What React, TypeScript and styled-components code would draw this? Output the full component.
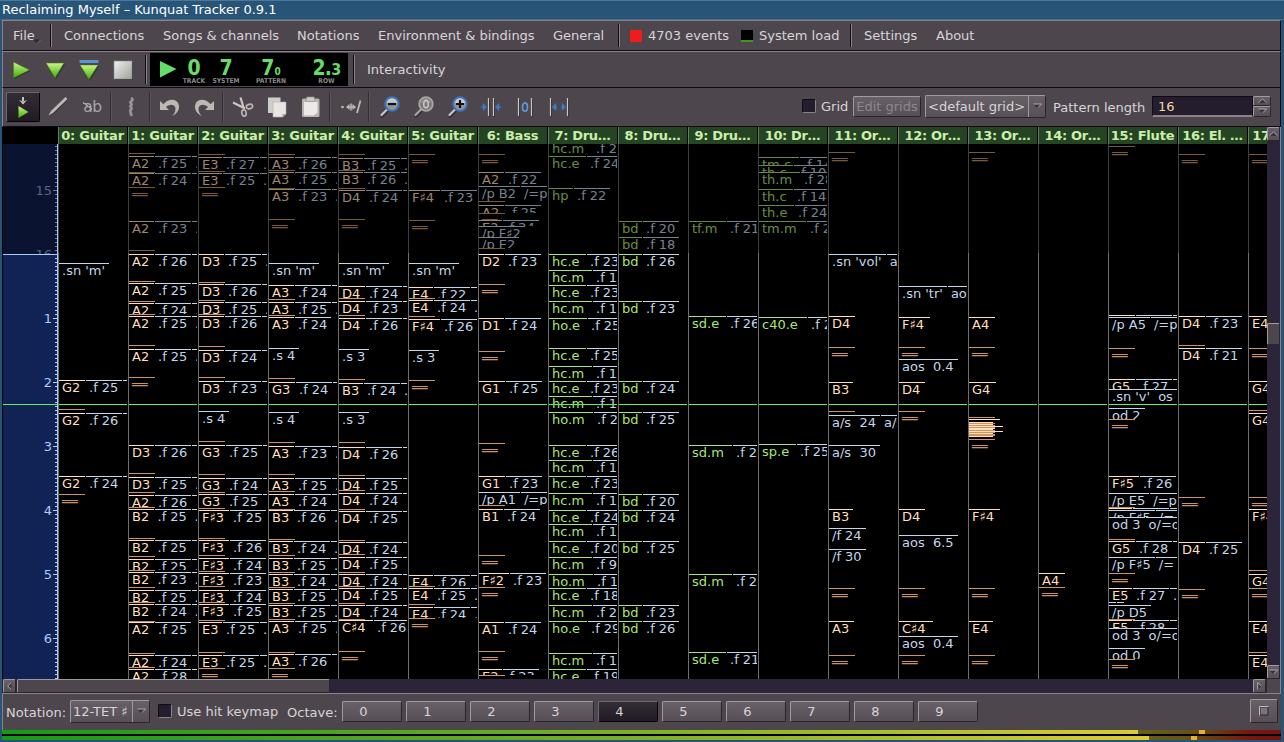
import React from 'react';
import styled, { createGlobalStyle, css } from 'styled-components';

const Global = createGlobalStyle`
  * { box-sizing: border-box; }
  body {
    margin: 0;
    background: #285577;
    font-family: "DejaVu Sans", sans-serif;
    font-size: 13px;
    color: #d8d4d8;
    overflow: hidden;
  }
`;

const C = {
  panel: '#4d474d',
  light: '#8a848a',
  dark: '#0f0a14',
  note: '#ffdfba',
  off: '#cc9460',
  ctrl: '#c4d6ea',
  hit: '#aae673',
};

/* ---------- window ---------- */

const Window = styled.div`
  width: 1284px;
  height: 742px;
  display: flex;
  flex-direction: column;
  background: #285577;
  padding: 0 3px 2px 2px;
`;

const Title = styled.div`
  height: 20px;
  margin: 0 -3px 0 -2px;
  padding-left: 2px;
  border-top: 1px solid #4a7899;
  border-bottom: 1px solid #4c6b86;
  color: #fff;
  line-height: 17px;
  white-space: pre;
`;

const Frame = styled.div`
  flex: 1;
  min-height: 0;
  display: flex;
  flex-direction: column;
  background: ${C.panel};
`;

const Bar = styled.div<{ $h: number; $top?: boolean }>`
  height: ${p => p.$h}px;
  flex: none;
  display: flex;
  align-items: center;
  background: ${C.panel};
  border-bottom: 1px solid ${C.dark};
  border-left: 1px solid ${C.light};
  border-right: 1px solid ${C.dark};
  ${p => p.$top && css`border-top: 1px solid ${C.light};`}
`;

const MenuItem = styled.div<{ $w: number }>`
  width: ${p => p.$w}px;
  flex: none;
  display: flex;
  align-items: center;
  white-space: pre;
`;

const MenuMark = styled.svg`
  margin: 12px 0 0 -2px;
`;

const Divider = styled.div<{ $h: number; $mr: number; $soft?: boolean }>`
  width: 2px;
  height: ${p => p.$h}px;
  flex: none;
  margin-right: ${p => p.$mr}px;
  border-left: 1px solid ${p => (p.$soft ? '#332d35' : C.dark)};
  border-right: 1px solid ${p => (p.$soft ? '#5b555b' : C.light)};
`;

const Swatch = styled.span<{ $c: string; $line?: boolean }>`
  width: 12px;
  height: 12px;
  margin-right: 6px;
  background: ${p => p.$c};
  ${p => p.$line && css`border-bottom: 2px solid #3f9a12;`}
`;

const IconSlot = styled.div<{ $w: number }>`
  width: ${p => p.$w}px;
  height: 30px;
  flex: none;
  display: flex;
  align-items: center;
  justify-content: center;
`;

/* ---------- transport display ---------- */

const Lcd = styled.div`
  width: 198px;
  height: 33px;
  flex: none;
  display: flex;
  background: #000;
  margin-right: 5px;
  padding-left: 10px;
`;

const LcdCell = styled.div<{ $w: number; $shift?: number }>`
  width: ${p => p.$w}px;
  flex: none;
  padding-left: ${p => p.$shift ?? 0}px;
  display: flex;
  flex-direction: column;
  align-items: center;
  font-family: "DejaVu Sans Condensed", "DejaVu Sans", sans-serif;
  font-stretch: condensed;
  font-weight: bold;
`;

const LcdValue = styled.div<{ $tight?: boolean }>`
  height: 25px;
  line-height: 31px;
  font-size: 21px;
  color: #66dd66;
  white-space: pre;
  ${p => p.$tight && css`letter-spacing: -0.8px;`}
`;

const LcdSmall = styled.span<{ $s: number }>`
  font-size: ${p => p.$s}px;
`;

const LcdLabel = styled.div`
  height: 8px;
  line-height: 7px;
  font-family: "DejaVu Sans", sans-serif;
  font-size: 6.7px;
  color: #8a8a8a;
`;

/* ---------- controls ---------- */

const raised = css`
  border: 1px solid;
  border-color: #a09aa0 #2a242c #2a242c #a09aa0;
  border-radius: 2px;
  background: linear-gradient(#676167, #565056);
`;

const Button = styled.div<{ $w: number; $h: number; $mr?: number; $disabled?: boolean; $on?: boolean; $shift?: number }>`
  ${raised}
  width: ${p => p.$w}px;
  height: ${p => p.$h}px;
  flex: none;
  display: flex;
  align-items: center;
  justify-content: center;
  margin-right: ${p => p.$mr ?? 0}px;
  padding-right: ${p => p.$shift ?? 0}px;
  white-space: pre;
  ${p => p.$disabled && css`color: #8e888e;`}
  ${p => p.$on && css`
    background: linear-gradient(#322c34, #211c24);
    border-color: #6d676d #060308 #060308 #6d676d;
  `}
`;

const Select = styled.div<{ $w: number; $mr: number }>`
  ${raised}
  width: ${p => p.$w}px;
  height: 23px;
  flex: none;
  display: flex;
  align-items: stretch;
  margin-right: ${p => p.$mr}px;
  line-height: 21px;
  white-space: pre;
`;

const SelectText = styled.div`
  flex: 1;
  padding-left: 2px;
  border-right: 1px solid #a09aa0;
`;

const SelectArrow = styled.div`
  width: 16px;
  display: flex;
  align-items: center;
  justify-content: center;
`;

const Check = styled.div<{ $mr: number }>`
  width: 14px;
  height: 14px;
  flex: none;
  margin-right: ${p => p.$mr}px;
  background: #231d2d;
  border: 1px solid;
  border-color: #0f0a14 #8a848a #8a848a #0f0a14;
  border-radius: 2px;
`;

const Label = styled.div<{ $w: number; $drop?: boolean }>`
  width: ${p => p.$w}px;
  flex: none;
  padding-top: ${p => (p.$drop ? 2 : 0)}px;
  white-space: pre;
`;

const ToolGroup = styled.div`
  display: flex;
  align-items: center;
  padding-bottom: 2px;
`;

const Spin = styled.div`
  display: flex;
  width: 119px;
  height: 21px;
`;

const SpinField = styled.div`
  flex: 1;
  padding-left: 5px;
  line-height: 19px;
  color: #f0d8a8;
  background: #231d2d;
  border: 1px solid;
  border-color: #0f0a14 #0f0a14 #8a848a #0f0a14;
  border-bottom-width: 2px;
`;

const SpinButtons = styled.div`
  width: 18px;
  display: flex;
  flex-direction: column;
`;

const SpinButton = styled.div`
  ${raised}
  flex: 1;
  display: flex;
  align-items: center;
  justify-content: center;
`;

/* ---------- pattern view ---------- */

const Sheet = styled.div`
  height: 552px;
  flex: none;
  display: flex;
  background: #000;
  border-left: 1px solid #000;
  border-right: 1px solid ${C.light};
  overflow: hidden;
`;

const RulerCol = styled.div`
  width: 55px;
  flex: none;
  padding-top: 17px;
`;

const Ruler = styled.div`
  position: relative;
  height: 535px;
  overflow: hidden;
  background: #112255;
  border-right: 1px solid #aaccff;
`;

const RulerPast = styled.div`
  position: absolute;
  left: 0;
  right: -1px;
  top: 0;
  height: 111px;
  overflow: hidden;
  background: #0a1431;
  border-bottom: 1px solid #aaccff;
  border-right: 1px solid #66779a;
`;

const Tick = styled.div<{ $y: number; $w: number; $dim?: boolean }>`
  position: absolute;
  right: 0;
  top: ${p => p.$y}px;
  width: ${p => p.$w}px;
  height: 1px;
  background: ${p => (p.$dim ? '#66779a' : '#aaccff')};
`;

const RulerText = styled.div<{ $y: number; $dim?: boolean }>`
  position: absolute;
  right: 5px;
  top: ${p => p.$y - 7}px;
  line-height: 16px;
  color: ${p => (p.$dim ? '#55657f' : '#aaccff')};
`;

const Columns = styled.div`
  flex: 1;
  min-width: 0;
  display: flex;
  overflow: hidden;
`;

const Column = styled.div`
  width: 70px;
  flex: none;
  display: flex;
  flex-direction: column;
`;

const Header = styled.div<{ $cut: boolean }>`
  height: 17px;
  width: 69px;
  overflow: hidden;
  padding-right: 1px;
  text-align: center;
  font-weight: bold;
  line-height: 18px;
  letter-spacing: ${p => (p.$cut ? -0.35 : -0.2)}px;
  white-space: pre;
  color: #cceeaa;
  background: #244424;
  border-left: 1px solid #5f7f5f;
`;

const Lane = styled.div`
  position: relative;
  height: 535px;
  width: 69px;
  overflow: hidden;
  border-left: 1px solid;
  border-image: linear-gradient(#3f3f3f 110px, #6e6e6e 110px) 1;
  border-width: 0 0 0 1px;
`;

const EventRow = styled.div<{ $y: number; $h: number; $dim: boolean }>`
  position: absolute;
  left: 0;
  top: ${p => p.$y}px;
  width: 68px;
  height: ${p => p.$h}px;
  overflow: hidden;
  display: flex;
  opacity: ${p => (p.$dim ? 0.6 : 1)};
`;

const Trigger = styled.div<{ $c: string; $w?: number }>`
  flex: none;
  ${p => p.$w && css`width: ${p.$w - 1}px;`}
  margin-right: 1px;
  padding: 0 4px 0 3px;
  height: 17px;
  border-top: 1px solid ${p => p.$c};
  color: ${p => p.$c};
  line-height: 14px;
  white-space: pre;
`;

const Playhead = styled.div`
  position: absolute;
  left: 0;
  right: 0;
  top: 260px;
  height: 1px;
  background: #66ee66;
`;

const WIDTHS: Record<string, number> = {
  A1: 26, A2: 26, A3: 26, A4: 27, B1: 25, B2: 25.5, B3: 25, D1: 26, D2: 26, D3: 26, D4: 27,
  E2: 23.5, E3: 24, E4: 25, E5: 24, G1: 27, G2: 27, G3: 27, G4: 28, G5: 27,
  'F♯2': 31, 'F♯3': 31, 'F♯4': 32, 'F♯5': 31, 'C♯4': 35,
  'hc.e': 38, 'hc.m': 44, 'ho.e': 39, 'ho.m': 45, hp: 25, bd: 24,
  'tm.c': 41, 'th.c': 35, 'th.m': 42, 'th.e': 36, 'tm.m': 48, 'tf.m': 38,
  'sd.e': 38, 'sd.m': 44, 'sp.e': 38, 'c40.e': 49,
};

/*
  One trigger row per entry, separated by ";":
    "<y>"                release
    "<y> <name> ..."     note or hit, then force (f) and a following item
    "<y> =<a>|<b>"       control triggers
  A trailing "." or "-" adds the third item, with or without a visible dot.
*/
const tracks: { name: string; rows: string }[] = [
  { name: '0: Guitar', rows: "263 =.sn 'm';380 G2 25 -;409;413 G2 26 -;476 G2 24 -;494" },
  { name: '1: Guitar', rows: '153;156 A2 25 .;172;173 A2 24 -;187;221 A2 23 .;250;254 A2 26 -;281;283 A2 25 -;301;303 A2 24 .;314;316 A2 25 .;345;349 A2 25 .;377;445 D3 26 -;473;477 D3 25 .;492;495 A2 26 -;507;509 B2 25 .;538;540 B2 25 -;556;559 B2 25 .;570;572 B2 23 .;587;590 B2 25 .;602;604 B2 24 .;621;622 A2 25;653;655 A2 24 -;667;669 A2 28 -' },
  { name: '2: Guitar', rows: '154;157 E3 27 .;171;173 E3 25 .;187;254 D3 25 .;282;284 D3 26 -;300;302 D3 25 .;314;316 D3 26 -;346;350 D3 24 -;377;381 D3 23 .;411 =.s 4;441;445 G3 25 -;474;478 G3 24 -;492;494 G3 25 -;508;510 F♯3 25;538;540 F♯3 26;555;558 F♯3 24;571;573 F♯3 23;586;590 F♯3 24;602;604 F♯3 25;620;622 E3 25 .;652;655 E3 25 .;668' },
  { name: '3: Guitar', rows: "154;157 A3 26 -;170;172 A3 25 .;188;189 A3 23 .;219;263 =.sn 'm';285 A3 24 -;299;302 A3 25 .;315;317 A3 24;348 =.s 4;378;382 G3 24 -;412 =.s 4;442;446 A3 23 .;474;478 A3 25 .;491;494 A3 24 -;509;510 B3 26 .;539;541 B3 24 .;555;558 B3 25 .;572;574 B3 24 .;587;589 B3 25 .;603;605 B3 25 .;619;621 A3 25 .;652;654 A3 26 -;668" },
  { name: '4: Guitar', rows: "154;158 B3 25 .;170;172 B3 26 .;188;190 D4 24 -;219;263 =.sn 'm';286 D4 24 -;298;301 D4 23 -;315;318 D4 26 -;349 =.s 3;379;383 B3 24 .;412 =.s 3;442;447 D4 26 -;475;478 D4 25 -;490;493 D4 24 -;509;511 D4 25 -;540;542 D4 24 -;554;557 D4 25 -;572;574 D4 24 -;586;588 D4 25 -;603;605 D4 24 -;619;620 C♯4 26;651" },
  { name: '5: Guitar', rows: "154;190 F♯4 23;220;263 =.sn 'm';287 E4 22 -;298;300 E4 24 .;316;319 F♯4 26;350 =.s 3;380;575 E4 26 .;586;588 E4 25 .;604;607 E4 24 .;618" },
  { name: '6: Bass', rows: '154;172 A2 22;186 =/p B2|/=p;201;205 A2 25;213;220 E2 24;226 =/p F♯2;237 =/p E2;248;254 D2 23;284;318 D1 24;351;381 G1 25;443;476 G1 23;492 =/p A1|/=p;505;509 B1 24;555;573 F♯2 23;587;622 A1 24;651;669 E2 23;675' },
  { name: '7: Dru…', rows: '141 hc.m 2;156 hc.e 24;188 hp 22;254 hc.e 23;270 hc.m 1;285 hc.e 23;301 hc.m 1;318 ho.e 25;348 hc.e 25;366 hc.m 1;381 hc.e 23;396 hc.m 1;412 ho.m 2;445 hc.e 26;460 hc.m 1;476 hc.e 23;493 hc.m 1;510 hc.e 24;524 hc.m 1;541 hc.e 20;557 hc.m 9;574 ho.m 1;588 hc.e 18;605 hc.m 2;621 ho.e 29;653 hc.m 1;669 hc.e 19' },
  { name: '8: Dru…', rows: '221 bd 20;237 bd 18;254 bd 26;301 bd 23;381 bd 24;412 bd 25;494 bd 20;510 bd 24;541 bd 25;605 bd 23;621 bd 26' },
  { name: '9: Dru…', rows: '221 tf.m 21;316 sd.e 26;445 sd.m 2;574 sd.m 2;652 sd.e 21' },
  { name: '10: Dr…', rows: '157 tm.c 14;165 th.c 10;172 th.m 28;189 th.c 14;205 th.e 24;221 tm.m 2;317 c40.e 2;444 sp.e 25' },
  { name: '11: Or…', rows: "152;254 =.sn 'vol'|ao;316 D4;347;382 B3;411;415 =a/s  24|a/s;445 =a/s  30;509 B3;528 =/f 24;549 =/f 30;588;621 A3;655" },
  { name: '12: Or…', rows: "286 =.sn 'tr'|aos;317 F♯4;347;359 =aos  0.4;382 D4;411;509 D4;535 =aos  6.5;588;621 C♯4;636 =aos  0.4;655" },
  { name: '13: Or…', rows: '152;317 A4;347;382 G4;417;419 F♯4;422 E4;423;424 E4;425;426 C♯4;427;428 A4;429 E4;430;431 C♯4;432;433 E4;434;435;436 E4;439;509 F♯4;588;621 E4;655' },
  { name: '14: Or…', rows: '573 A4;587' },
  { name: '15: Flute', rows: "146;315 A4 25 -;317 =/p A5|/=p;348;379 G5 27 -;389 =.sn 'v'|os;408 =od 2;419;476 F♯5 26;493 =/p E5|/=p;507;508 E5 25 -;510 =/p F♯5|/=;517 =od 3|o/=o;539;541 G5 28 -;557 =/p F♯5|/=;573;588 E5 27 .;602 =/p E5|/=p;605 =/p D5;619;620 E5 28 -;628 =od 3|o/=o;648 =od 0;659" },
  { name: '16: El. …', rows: '154;316 D4 23;345;348 D4 21;497;542 D4 25;589' },
  { name: '17: El. …', rows: '154;316 E4;348;381 G4;410;413 G4;497;509 F♯4;570;574 G4;588;621 E4;652;655 E4' },
];

type Item = { text: string; color: string; width?: number };

function parse(row: string): { y: number; items: Item[] } {
  const cut = row.indexOf(' ');
  if (cut < 0) return { y: +row, items: [{ text: '══', color: C.off, width: 27 }] };
  const y = +row.slice(0, cut);
  const rest = row.slice(cut + 1);
  if (rest[0] === '=') {
    return { y, items: rest.slice(1).split('|').map(text => ({ text, color: C.ctrl })) };
  }
  const [name, force, third] = rest.split(' ');
  const items: Item[] = [{ text: name, color: /^[A-G]/.test(name) ? C.note : C.hit, width: WIDTHS[name] }];
  if (force) items.push({ text: '.f ' + force, color: C.ctrl, width: 37 });
  if (third) items.push({ text: third === '.' ? '.' : ' ', color: C.ctrl, width: 20 });
  return { y, items };
}

function Track({ name, rows }: { name: string; rows: string }) {
  const events = rows.split(';').map(parse);
  return (
    <Column>
      <Header $cut={name.endsWith('…')}>{name}</Header>
      <Lane>
        {events.map((e, i) => {
          const h = Math.min(17, (events[i + 1]?.y ?? 999) - e.y);
          return (
            <EventRow key={i} $y={e.y - 144} $h={h} $dim={e.y < 254}>
              {e.items.map((it, j) => (
                <Trigger key={j} $c={it.color} $w={it.width}>{h > 4 ? it.text : ''}</Trigger>
              ))}
            </EventRow>
          );
        })}
        <Playhead />
      </Lane>
    </Column>
  );
}

function TimeRuler() {
  return (
    <RulerCol>
      <Ruler>
        {Array.from({ length: 106 }, (_, i) => (
          <Tick key={i} $y={114 + i * 4} $w={(i + 1) % 16 === 0 ? 4 : 2} />
        ))}
        {[1, 2, 3, 4, 5, 6].map(n => <RulerText key={n} $y={110 + n * 64}>{n}</RulerText>)}
        <RulerPast>
          {Array.from({ length: 28 }, (_, i) => (
            <Tick key={i} $dim $y={110 - i * 4} $w={i % 16 === 0 ? 4 : 2} />
          ))}
          <RulerText $dim $y={46}>15</RulerText>
          <RulerText $dim $y={110}>16</RulerText>
        </RulerPast>
        <Playhead />
      </Ruler>
    </RulerCol>
  );
}

/* ---------- scroll bars ---------- */

const VScroll = styled.div`
  width: 13px;
  flex: none;
  display: flex;
  flex-direction: column;
  background: #2c2438;
`;

const HScroll = styled.div`
  height: 14px;
  flex: none;
  display: flex;
  background: #2c2438;
  padding-left: 1px;
  border-right: 1px solid ${C.light};
`;

const ScrollButton = styled.div`
  ${raised}
  width: 13px;
  height: 14px;
  flex: none;
  display: flex;
  align-items: center;
  justify-content: center;
`;

const Thumb = styled.div<{ $w: number; $h: number }>`
  ${raised}
  background: ${C.panel};
  width: ${p => p.$w}px;
  height: ${p => p.$h}px;
  flex: none;
`;

const Gap = styled.div<{ $s?: number }>`
  flex: ${p => (p.$s === undefined ? '1' : `0 0 ${p.$s}px`)};
`;

const Corner = styled.div`
  width: 13px;
  background: ${C.panel};
`;

/* ---------- footer ---------- */

const Footer = styled.div`
  height: 37px;
  flex: none;
  display: flex;
  align-items: center;
  padding: 0 0 2px 3px;
  border-top: 1px solid ${C.light};
  border-left: 1px solid ${C.light};
`;

const Meter = styled.div<{ $level: number; $peak: number }>`
  height: 4px;
  flex: none;
  background:
    linear-gradient(#e8b030, #e8b030) ${p => p.$peak}px 0 / 6px 4px no-repeat,
    linear-gradient(to right, #149a14 0, #7db026 640px, #dccc30 1146px) 0 0 / ${p => p.$level}px 4px no-repeat,
    linear-gradient(to right, #66601a 1140px, #665014 1190px, #7a1410 1250px, #781410 100%);
`;

const Meters = styled.div`
  height: 10px;
  flex: none;
  display: flex;
  flex-direction: column;
  gap: 2px;
  background: #000;
`;

/* ---------- icons ---------- */

const Svg = ({ w = 24, h = 24, children }: { w?: number; h?: number; children: React.ReactNode }) => (
  <svg width={w} height={h} viewBox={`0 0 ${w} ${h}`} fill="none">{children}</svg>
);

const Glyph = styled.svg`
  flex: none;
`;

const arrowPaths = {
  up: ['M0 6h9L4.500 1.500z', 'M0.500 5.800L4.500 1.800l4 4'],
  down: ['M0 2h9L4.500 6.500z', 'M0.500 2h8L4.800 5.800'],
  left: ['M6.500 0v8L2.500 4z', 'M6.300 0.500L2.700 4l3.600 3.500'],
  right: ['M2.500 0v8l4-4z', 'M2.700 7.500v-7l3.600 3.500'],
};

const Arrow = ({ d }: { d: keyof typeof arrowPaths }) => (
  <Glyph width="9" height="8" viewBox="0 0 9 8">
    <path d={arrowPaths[d][0]} fill="#38323a" />
    <path d={arrowPaths[d][1]} stroke="#b4aeb4" strokeWidth="1" fill="none" />
  </Glyph>
);

const DefsHolder = styled.svg`
  display: block;
  height: 0;
`;

const Defs = () => (
  <DefsHolder width="0" height="0">
    <defs>
      <linearGradient id="g" x1="0" y1="0" x2="0" y2="1">
        <stop offset="0" stopColor="#c8f488" />
        <stop offset="1" stopColor="#3fae06" />
      </linearGradient>
      <linearGradient id="s" x1="0" y1="0" x2="1" y2="1">
        <stop offset="0" stopColor="#f0f0ee" />
        <stop offset="1" stopColor="#a0a09c" />
      </linearGradient>
    </defs>
  </DefsHolder>
);

const Lens = ({ mark, gray }: { mark: '-' | '+' | '0'; gray?: boolean }) => (
  <Svg>
    <path d="M4 21l7-7" stroke="#2c2830" strokeWidth="3.400" strokeLinecap="round" opacity=".8" />
    <path d="M3.500 20l7-7" stroke={gray ? '#aaa6a4' : '#c8c8c4'} strokeWidth="2.200" strokeLinecap="round" />
    <circle cx="14" cy="9" r="6.800" fill={gray ? '#7c767a' : '#8f9498'} stroke={gray ? '#aaa6a4' : '#3a74c0'} strokeWidth="1.800" />
    <path d="M9 8a5 4.500 0 0 1 10 0z" fill={gray ? '#8e8a8c' : '#c8ccd0'} />
    {mark === '0'
      ? <ellipse cx="14" cy="9" rx="2.300" ry="3.800" stroke="#cac6c4" strokeWidth="1.500" />
      : <path d={mark === '+' ? 'M10 9h8M14 5v8' : 'M10 9h8'} stroke="#111" strokeWidth="2.200" />}
  </Svg>
);

const Rails = ({ x1, x2, children }: { x1: number; x2: number; children: React.ReactNode }) => (
  <Svg>
    <path d={`M${x1 + 1} 4v18M${x2 + 1} 4v18`} stroke="#2e2a32" strokeWidth="1" />
    <path d={`M${x1} 3v18M${x2} 3v18`} stroke="#c8c8c0" strokeWidth="1.200" />
    {children}
  </Svg>
);

const gray = '#bcb8b4';

const icons = {
  insert: (
    <Svg>
      <path d="M12 2v4" stroke="#c8c4c0" strokeWidth="2" />
      <path d="M8 5l4 4.500L16 5l-4 1.500z" fill="#c8c4c0" />
      <path d="M7.500 11v12l10-6z" fill="url(#g)" />
    </Svg>
  ),
  pen: <Svg><path d="M4 21l2-4.500L20 2.500l2.500 2L8.500 18.500z" fill="#2e2a32" opacity=".5" /><path d="M2.500 20.500l2.500-4.500L19.500 2l2 2L7 18z" fill={gray} /></Svg>,
  wiggle: <Svg><path d="M11 3c2 1 2 2 0 3.500s2 2.500 0 4 2 2.500 0 4 1 4 0 6.500" stroke="#8c878a" strokeWidth="3" /><path d="M11 3c2 1 2 2 0 3.500s2 2.500 0 4 2 2.500 0 4 1 4 0 6.500" stroke="#aaa5a5" strokeWidth="1" /></Svg>,
  undo: <Svg><path d="M2 6v9h9l-3-3c3-3 8-3.500 9.300.5.8 3-.6 5.800-3 8.500 5-2.500 7.700-7 6.400-11.500C18.700 3.200 10.500 3.500 5.400 9.200z" fill={gray} /></Svg>,
  redo: <Svg><path d="M22 6v9h-9l3-3c-3-3-8-3.500-9.300.5-.8 3 .6 5.800 3 8.500-5-2.500-7.700-7-6.400-11.500C5.300 3.200 13.500 3.500 18.600 9.200z" fill={gray} /></Svg>,
  cut: (
    <Svg>
      <path d="M9.500 2.500l3 10M2 7.500l12 6" stroke="#cac8c4" strokeWidth="2.200" />
      <ellipse cx="18.500" cy="11.500" rx="3.200" ry="2.200" stroke={gray} strokeWidth="1.600" transform="rotate(-15 18.500 11.500)" />
      <ellipse cx="13" cy="18" rx="2.200" ry="3.200" stroke={gray} strokeWidth="1.600" transform="rotate(-10 13 18)" />
    </Svg>
  ),
  copy: (
    <Svg>
      <path d="M3 2.500h12.500V18H3z" fill="#d0cecb" />
      <path d="M8 7h13v12l-3.500 3H8z" fill="#e8e6e3" stroke="#b0aca8" strokeWidth="0.600" />
      <path d="M17.500 22v-3H21z" fill="#a8a4a0" />
    </Svg>
  ),
  paste: (
    <Svg>
      <rect x="3" y="3.500" width="17.500" height="18.500" rx="1.500" fill="#b8b4b0" />
      <path d="M5 7h13.500v10.500L15 20.500H5z" fill="#eceae6" />
      <rect x="7.500" y="2" width="8" height="4.500" rx="1" fill="#cfccc8" stroke="#948f90" strokeWidth="0.700" />
    </Svg>
  ),
  rest: (
    <Svg>
      <circle cx="3.500" cy="12" r="1.300" fill={gray} />
      <path d="M8 12h7M12 8.500v7" stroke={gray} strokeWidth="1.500" />
      <path d="M10.500 9v6L7 12zM13.500 9l3.500 3-3.500 3z" fill={gray} />
      <path d="M21.500 5.500L18 18" stroke={gray} strokeWidth="1.800" />
    </Svg>
  ),
};

const RenameText = styled.span`
  font-size: 15.5px;
  color: #aaa5a6;
  letter-spacing: -0.3px;
`;

const Crossed = styled.span`
  background: linear-gradient(38deg, transparent 46%, #aaa5a6 46%, #aaa5a6 56%, transparent 56%) 0 3px / 9px 10px no-repeat;
`;

const octaves = [0, 1, 2, 3, 4, 5, 6, 7, 8, 9];

export default function App() {
  return (
    <>
      <Global />
      <Defs />
      <Window>
        <Title>Reclaiming Myself – Kunquat Tracker 0.9.1</Title>
        <Frame>
          <Bar $h={31} $top>
            <Gap $s={10} />
            <MenuItem $w={37}>
              File
              <MenuMark width="8" height="5" viewBox="0 0 8 5">
                <path d="M0 0.500h8L4 4.500z" fill="#2e2830" />
                <path d="M7.500 1L4 4.500" stroke="#8a848a" strokeWidth="0.800" />
              </MenuMark>
            </MenuItem>
            <Divider $h={23} $mr={12} />
            <MenuItem $w={99}>Connections</MenuItem>
            <MenuItem $w={134}>Songs &amp; channels</MenuItem>
            <MenuItem $w={81}>Notations</MenuItem>
            <MenuItem $w={175}>Environment &amp; bindings</MenuItem>
            <MenuItem $w={65}>General</MenuItem>
            <Divider $h={23} $mr={10} />
            <MenuItem $w={111}><Swatch $c="#ee1c1c" />4703 events</MenuItem>
            <MenuItem $w={109}><Swatch $c="#000" $line />System load</MenuItem>
            <Divider $h={23} $mr={12} />
            <MenuItem $w={72}>Settings</MenuItem>
            <MenuItem $w={60}>About</MenuItem>
          </Bar>
          <Bar $h={37} $top>
            <IconSlot $w={34}>
              <Svg><path d="M6.500 5v16L22.500 13z" fill="#24202a" opacity=".6" /><path d="M5.500 4v16L21.500 12z" fill="url(#g)" stroke="#3a7a10" strokeWidth=".5" /></Svg>
            </IconSlot>
            <Gap $s={1} />
            <IconSlot $w={34}>
              <Svg><path d="M4 6h18l-9 15z" fill="#24202a" opacity=".6" /><path d="M3 5h18l-9 15z" fill="url(#g)" stroke="#3a7a10" strokeWidth=".5" /></Svg>
            </IconSlot>
            <IconSlot $w={34}>
              <Svg><path d="M4 8h18l-9 15z" fill="#24202a" opacity=".6" /><path d="M2.500 2h19v3h-19z" fill="#5a90d8" /><path d="M3 7h18l-9 14.500z" fill="url(#g)" stroke="#3a7a10" strokeWidth=".5" /></Svg>
            </IconSlot>
            <IconSlot $w={34}>
              <Svg><rect x="4" y="4" width="18" height="18" fill="#24202a" opacity=".6" /><rect x="3" y="3" width="18" height="18" fill="url(#s)" stroke="#8a8a86" strokeWidth=".6" /></Svg>
            </IconSlot>
            <Gap $s={5} />
            <Divider $h={29} $mr={3} />
            <Lcd>
              <Svg w={18} h={33}><path d="M0 8v16.500L16.500 16z" fill="#66dd66" /></Svg>
              <LcdCell $w={32}><LcdValue>0</LcdValue><LcdLabel>TRACK</LcdLabel></LcdCell>
              <LcdCell $w={32}><LcdValue>7</LcdValue><LcdLabel>SYSTEM</LcdLabel></LcdCell>
              <LcdCell $w={58}><LcdValue>7<LcdSmall $s={10}>0</LcdSmall></LcdValue><LcdLabel>PATTERN</LcdLabel></LcdCell>
              <LcdCell $w={48} $shift={5}><LcdValue $tight>2.<LcdSmall $s={16}>3</LcdSmall></LcdValue><LcdLabel>ROW</LcdLabel></LcdCell>
            </Lcd>
            <Divider $h={29} $mr={12} />
            <MenuItem $w={90}>Interactivity</MenuItem>
          </Bar>
          <Bar $h={39}>
            <Gap $s={3} />
            <Button $w={34} $h={30} $on>{icons.insert}</Button>
            <IconSlot $w={36}>{icons.pen}</IconSlot>
            <IconSlot $w={33}><RenameText><Crossed>a</Crossed>b</RenameText></IconSlot>
            <Gap $s={1} />
            <Divider $h={30} $mr={2} $soft />
            <IconSlot $w={35}>{icons.wiggle}</IconSlot>
            <Divider $h={30} $mr={2} $soft />
            <IconSlot $w={34}>{icons.undo}</IconSlot>
            <IconSlot $w={34}>{icons.redo}</IconSlot>
            <Gap $s={1} />
            <Divider $h={30} $mr={2} $soft />
            <IconSlot $w={34}>{icons.cut}</IconSlot>
            <IconSlot $w={34}>{icons.copy}</IconSlot>
            <IconSlot $w={34}>{icons.paste}</IconSlot>
            <Gap $s={1} />
            <Divider $h={30} $mr={2} $soft />
            <IconSlot $w={35}>{icons.rest}</IconSlot>
            <Divider $h={30} $mr={3} $soft />
            <IconSlot $w={34}><Lens mark="-" /></IconSlot>
            <IconSlot $w={34}><Lens mark="0" gray /></IconSlot>
            <IconSlot $w={33}><Lens mark="+" /></IconSlot>
            <IconSlot $w={34}>
              <Rails x1={9.5} x2={14.5}><path d="M2 12h3M4.500 9.500L7 12l-2.500 2.500zM22 12h-3M19.500 9.500L17 12l2.500 2.500z" fill="#3a78c8" stroke="#3a78c8" strokeWidth="1.400" /></Rails>
            </IconSlot>
            <IconSlot $w={34}>
              <Rails x1={5.5} x2={18.5}><ellipse cx="12" cy="12" rx="2.500" ry="4.200" stroke="#5a98e0" strokeWidth="1.700" /></Rails>
            </IconSlot>
            <IconSlot $w={34}>
              <Rails x1={3.5} x2={20.5}><path d="M7 12h3M8.500 9.500v5L6 12zM17 12h-3M15.500 9.500v5L18 12z" fill="#3a78c8" stroke="#3a78c8" strokeWidth="1.400" /></Rails>
            </IconSlot>
            <Gap />
            <ToolGroup>
              <Check $mr={5} />
              <Label $w={32}>Grid</Label>
              <Button $w={68} $h={21} $mr={4} $disabled>Edit grids</Button>
              <Select $w={121} $mr={7}><SelectText>&lt;default grid&gt;</SelectText><SelectArrow><Arrow d="down" /></SelectArrow></Select>
              <Label $w={99} $drop>Pattern length</Label>
              <Spin>
                <SpinField>16</SpinField>
                <SpinButtons>
                  <SpinButton><Arrow d="up" /></SpinButton>
                  <SpinButton><Arrow d="down" /></SpinButton>
                </SpinButtons>
              </Spin>
            </ToolGroup>
            <Gap $s={9} />
          </Bar>
          <Sheet>
            <TimeRuler />
            <Columns>{tracks.map(t => <Track key={t.name} {...t} />)}</Columns>
            <VScroll>
              <ScrollButton><Arrow d="up" /></ScrollButton>
              <Gap $s={182} />
              <Thumb $w={13} $h={22} />
              <Gap />
              <ScrollButton><Arrow d="down" /></ScrollButton>
            </VScroll>
          </Sheet>
          <HScroll>
            <ScrollButton><Arrow d="left" /></ScrollButton>
            <Gap $s={1} />
            <Thumb $w={313} $h={14} />
            <Gap />
            <ScrollButton><Arrow d="right" /></ScrollButton>
            <Gap $s={1} />
            <Corner />
          </HScroll>
          <Footer>
            <Label $w={64} $drop>Notation:</Label>
            <Select $w={80} $mr={8}><SelectText>12-TET ♯</SelectText><SelectArrow><Arrow d="down" /></SelectArrow></Select>
            <Check $mr={5} />
            <Label $w={110}>Use hit keymap</Label>
            <Label $w={55} $drop>Octave:</Label>
            {octaves.map(n => (
              <Button key={n} $w={60} $h={21} $mr={4} $shift={17} $on={n === 4}>{n}</Button>
            ))}
            <Gap />
            <Button $w={28} $h={24} $mr={3}>
              <Svg w={10} h={10}><path d="M1 1h8v8H1z" fill="#7a747a" stroke="#2a242c" /><path d="M.5 9.500v-9h9" stroke="#c0bcc0" /></Svg>
            </Button>
          </Footer>
          <Meters>
            <Meter $level={1136} $peak={1197} />
            <Meter $level={1147} $peak={1189} />
          </Meters>
        </Frame>
      </Window>
    </>
  );
}
